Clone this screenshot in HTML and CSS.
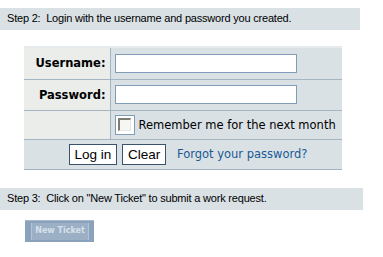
FILE: index.html
```html
<!DOCTYPE html>
<html lang="en">
<head>
    <meta charset="UTF-8">
    <title>Login</title>
    <link rel="stylesheet" href="styles.css">
</head>
<body>
    <div class="step step-two">Step 2:&nbsp; Login with the username and password you created.</div>

    <form class="login">
        <table class="login-table">
            <tr>
                <th class="label">Username:</th>
                <td class="field"><input type="text" class="text-input"></td>
            </tr>
            <tr>
                <th class="label">Password:</th>
                <td class="field"><input type="password" class="text-input"></td>
            </tr>
            <tr>
                <th class="label"></th>
                <td class="field remember">
                    <label class="remember-label"><span class="check"><input type="checkbox" class="check-box"></span>Remember me for the next month</label>
                </td>
            </tr>
            <tr class="actions">
                <td colspan="2">
                    <button type="button" class="btn">Log in</button>
                    <button type="button" class="btn">Clear</button>
                    <a href="#" class="forgot">Forgot your password?</a>
                </td>
            </tr>
        </table>
    </form>

    <div class="step step-three">Step 3:&nbsp; Click on "New Ticket" to submit a work request.</div>

    <div class="ticket-wrap">
        <a href="#" class="new-ticket"><span class="new-ticket-inner">New Ticket</span></a>
    </div>
</body>
</html>
```

FILE: styles.css
```css
* {
    box-sizing: border-box;
    margin: 0;
    padding: 0;
}

body {
    background-color: white;
    font-family: "DejaVu Sans", Verdana, sans-serif;
    font-size: 11.5px;
    color: black;
}

.step {
    background-color: #d9e1e5;
    height: 22px;
    line-height: 21px;
    padding-left: 7px;
    font-family: "Liberation Sans", Arial, sans-serif;
    font-size: 11px;
    letter-spacing: -0.2px;
}

.step-two {
    width: 360px;
    margin-top: 8px;
}

.step-three {
    width: 363px;
    margin-top: 18px;
}

.login {
    margin: 16px 0 0 24px;
    width: 318px;
}

.login-table {
    width: 318px;
    border-collapse: collapse;
    border-top: 2px solid #e6eaec;
}

.login-table tr {
    border-bottom: 1px solid #a3b4c3;
}

.label {
    width: 86px;
    background-color: #ebedeb;
    border-right: 1px solid #a3b4c3;
    text-align: right;
    padding-right: 4px;
    font-weight: bold;
    font-size: 11.5px;
}

.field {
    background-color: #d9e1e5;
    padding-left: 4px;
}

.login-table tr:nth-child(1) td,
.login-table tr:nth-child(1) th {
    height: 32px;
}

.login-table tr:nth-child(2) td,
.login-table tr:nth-child(2) th {
    height: 31px;
}

.login-table tr:nth-child(3) td,
.login-table tr:nth-child(3) th {
    height: 29px;
}

.text-input {
    display: block;
    width: 182px;
    height: 19px;
    border: 1px solid #7f9db9;
    background-color: white;
}

.remember-label {
    display: flex;
    align-items: center;
    gap: 4px;
}

.check {
    display: inline-flex;
    align-items: center;
    justify-content: center;
    width: 20px;
    height: 20px;
    border: 1px solid #7f9db9;
    background-color: white;
}

.check-box {
    appearance: none;
    width: 13px;
    height: 13px;
    border-top: 2px solid #7d7d78;
    border-left: 2px solid #7d7d78;
    border-right: 1px solid #e8e8e2;
    border-bottom: 1px solid #e8e8e2;
    background-color: #f6f6f2;
}

.actions td {
    background-color: #d9e1e5;
    height: 30px;
    text-align: center;
    padding-left: 10px;
}

.btn {
    height: 21px;
    padding: 0 5px;
    background-color: white;
    border: 1px solid #3a536b;
    font-family: "Liberation Sans", Arial, sans-serif;
    font-size: 13.5px;
    color: black;
    vertical-align: middle;
}

.btn + .btn {
    margin-left: 1px;
}

.forgot {
    color: #1a5a94;
    text-decoration: none;
    margin-left: 7px;
    vertical-align: middle;
}

.ticket-wrap {
    padding: 10px 0 0 25px;
}

.new-ticket {
    display: inline-block;
    width: 69px;
    height: 22px;
    padding: 2px 5px 2px 6px;
    background-color: #8aa2bb;
    border-top: 1px solid #a6b8ca;
    text-decoration: none;
}

.new-ticket-inner {
    display: block;
    height: 17px;
    line-height: 16px;
    background-color: #9bb0c5;
    border-left: 1px solid #b4c4d4;
    border-right: 1px solid #b4c4d4;
    text-align: center;
    font-size: 8px;
    font-weight: bold;
    color: #d6e0ea;
}
```
